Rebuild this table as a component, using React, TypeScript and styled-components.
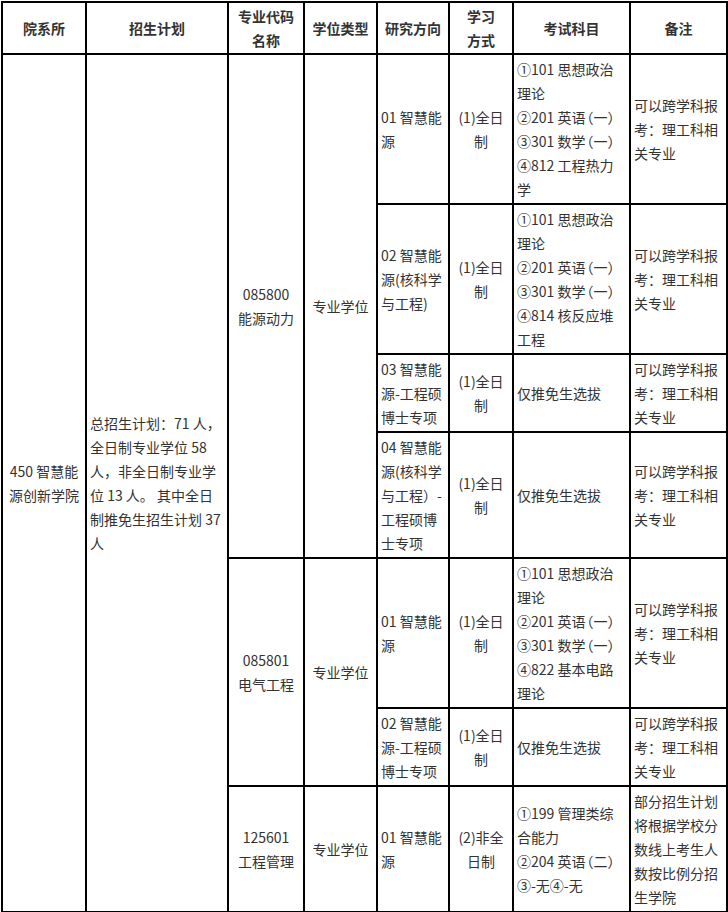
import React from "react";
import styled, { createGlobalStyle } from "styled-components";

const GlobalStyle = createGlobalStyle`
  html, body {
    margin: 0;
    padding: 0;
    background: #fff;
  }
  body {
    font-family: "Microsoft YaHei", "Noto Sans CJK SC", "Noto Sans", sans-serif;
    color: #333;
  }
`;

const PageWrapper = styled.div`
  padding: 1px;
  width: 728px;
  box-sizing: border-box;
`;

const Table = styled.table`
  border-collapse: collapse;
  table-layout: fixed;
  width: 725px;
  font-size: 14px;
  line-height: 24px;
`;

const Col = styled.col<{ $w: number }>`
  width: ${(p) => p.$w}px;
`;

const HeadCell = styled.th`
  border: 2px solid #000;
  padding: 1px 3px;
  font-weight: bold;
  text-align: center;
  vertical-align: middle;
  white-space: nowrap;
  color: #333;
`;

const Cell = styled.td<{ $align?: "left" | "center" }>`
  border: 2px solid #000;
  padding: 2px 3px;
  text-align: ${(p) => p.$align || "left"};
  vertical-align: middle;
  white-space: nowrap;
  color: #333;
`;

// exam subjects: full-width brackets set a little tighter, as in the source
const ExamCell = styled(Cell)`
  font-feature-settings: "halt";
`;

const Bracket = styled.span`
  margin: 0 1px;
`;

const Lines = ({ items }: { items: string[] }) => (
  <>
    {items.map((line, i) => (
      <React.Fragment key={i}>
        {i > 0 && <br />}
        {line}
      </React.Fragment>
    ))}
  </>
);

const ExamLines = ({ items }: { items: string[] }) => (
  <>
    {items.map((line, i) => {
      const m = line.match(/^(.*?)（(.)）$/);
      return (
        <React.Fragment key={i}>
          {i > 0 && <br />}
          {m ? (
            <>
              {m[1]}
              <Bracket>（{m[2]}）</Bracket>
            </>
          ) : (
            line
          )}
        </React.Fragment>
      );
    })}
  </>
);

const widths = [84, 142, 76, 73, 72, 64, 117, 97];

const remark = ["可以跨学科报", "考：理工科相", "关专业"];
const fullTime = ["(1)全日", "制"];
const pushOnly = ["仅推免生选拔"];

export default function App() {
  return (
    <PageWrapper>
      <GlobalStyle />
      <Table>
        <colgroup>
          {widths.map((w, i) => (
            <Col key={i} $w={w} />
          ))}
        </colgroup>
        <thead>
          <tr>
            <HeadCell>院系所</HeadCell>
            <HeadCell>招生计划</HeadCell>
            <HeadCell>
              <Lines items={["专业代码", "名称"]} />
            </HeadCell>
            <HeadCell>学位类型</HeadCell>
            <HeadCell>研究方向</HeadCell>
            <HeadCell>
              <Lines items={["学习", "方式"]} />
            </HeadCell>
            <HeadCell>考试科目</HeadCell>
            <HeadCell>备注</HeadCell>
          </tr>
        </thead>
        <tbody>
          <tr>
            <Cell rowSpan={7} $align="center">
              <Lines items={["450 智慧能", "源创新学院"]} />
            </Cell>
            <Cell rowSpan={7}>
              <Lines
                items={[
                  "总招生计划：71 人，",
                  "全日制专业学位 58",
                  "人，非全日制专业学",
                  "位 13 人。 其中全日",
                  "制推免生招生计划 37",
                  "人",
                ]}
              />
            </Cell>
            <Cell rowSpan={4} $align="center">
              <Lines items={["085800", "能源动力"]} />
            </Cell>
            <Cell rowSpan={4} $align="center">
              专业学位
            </Cell>
            <Cell>
              <Lines items={["01 智慧能", "源"]} />
            </Cell>
            <Cell $align="center">
              <Lines items={fullTime} />
            </Cell>
            <ExamCell>
              <ExamLines
                items={[
                  "①101 思想政治",
                  "理论",
                  "②201 英语（一）",
                  "③301 数学（一）",
                  "④812 工程热力",
                  "学",
                ]}
              />
            </ExamCell>
            <Cell>
              <Lines items={remark} />
            </Cell>
          </tr>
          <tr>
            <Cell>
              <Lines items={["02 智慧能", "源(核科学", "与工程)"]} />
            </Cell>
            <Cell $align="center">
              <Lines items={fullTime} />
            </Cell>
            <ExamCell>
              <ExamLines
                items={[
                  "①101 思想政治",
                  "理论",
                  "②201 英语（一）",
                  "③301 数学（一）",
                  "④814 核反应堆",
                  "工程",
                ]}
              />
            </ExamCell>
            <Cell>
              <Lines items={remark} />
            </Cell>
          </tr>
          <tr>
            <Cell>
              <Lines items={["03 智慧能", "源-工程硕", "博士专项"]} />
            </Cell>
            <Cell $align="center">
              <Lines items={fullTime} />
            </Cell>
            <ExamCell>
              <Lines items={pushOnly} />
            </ExamCell>
            <Cell>
              <Lines items={remark} />
            </Cell>
          </tr>
          <tr>
            <Cell>
              <Lines
                items={["04 智慧能", "源(核科学", "与工程）-", "工程硕博", "士专项"]}
              />
            </Cell>
            <Cell $align="center">
              <Lines items={fullTime} />
            </Cell>
            <ExamCell>
              <Lines items={pushOnly} />
            </ExamCell>
            <Cell>
              <Lines items={remark} />
            </Cell>
          </tr>
          <tr>
            <Cell rowSpan={2} $align="center">
              <Lines items={["085801", "电气工程"]} />
            </Cell>
            <Cell rowSpan={2} $align="center">
              专业学位
            </Cell>
            <Cell>
              <Lines items={["01 智慧能", "源"]} />
            </Cell>
            <Cell $align="center">
              <Lines items={fullTime} />
            </Cell>
            <ExamCell>
              <ExamLines
                items={[
                  "①101 思想政治",
                  "理论",
                  "②201 英语（一）",
                  "③301 数学（一）",
                  "④822 基本电路",
                  "理论",
                ]}
              />
            </ExamCell>
            <Cell>
              <Lines items={remark} />
            </Cell>
          </tr>
          <tr>
            <Cell>
              <Lines items={["02 智慧能", "源-工程硕", "博士专项"]} />
            </Cell>
            <Cell $align="center">
              <Lines items={fullTime} />
            </Cell>
            <ExamCell>
              <Lines items={pushOnly} />
            </ExamCell>
            <Cell>
              <Lines items={remark} />
            </Cell>
          </tr>
          <tr>
            <Cell $align="center">
              <Lines items={["125601", "工程管理"]} />
            </Cell>
            <Cell $align="center">专业学位</Cell>
            <Cell>
              <Lines items={["01 智慧能", "源"]} />
            </Cell>
            <Cell $align="center">
              <Lines items={["(2)非全", "日制"]} />
            </Cell>
            <ExamCell>
              <ExamLines
                items={["①199 管理类综", "合能力", "②204 英语（二）", "③-无④-无"]}
              />
            </ExamCell>
            <Cell>
              <Lines
                items={[
                  "部分招生计划",
                  "将根据学校分",
                  "数线上考生人",
                  "数按比例分招",
                  "生学院",
                ]}
              />
            </Cell>
          </tr>
        </tbody>
      </Table>
    </PageWrapper>
  );
}
